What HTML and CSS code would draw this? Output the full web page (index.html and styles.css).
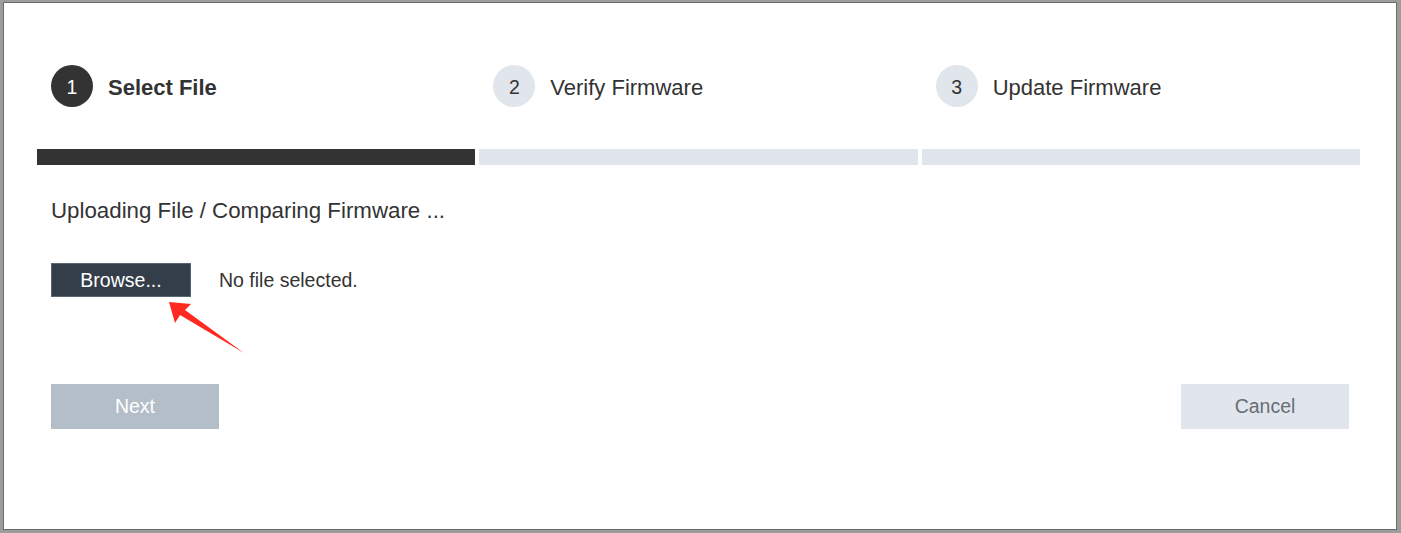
FILE: index.html
```html
<!DOCTYPE html>
<html lang="en">
<head>
    <meta charset="UTF-8">
    <meta name="viewport" content="width=device-width, initial-scale=1.0">
    <title>Firmware Update</title>
    <link rel="stylesheet" href="styles.css">
</head>
<body>
    <div class="modal">
        <div class="steps">
            <div class="step active">
                <span class="step-num">1</span>
                <span class="step-label">Select File</span>
            </div>
            <div class="step">
                <span class="step-num">2</span>
                <span class="step-label">Verify Firmware</span>
            </div>
            <div class="step">
                <span class="step-num">3</span>
                <span class="step-label">Update Firmware</span>
            </div>
        </div>
        <div class="progress">
            <div class="segment done"></div>
            <div class="segment"></div>
            <div class="segment"></div>
        </div>

        <div class="content">
            <p class="status">Uploading File / Comparing Firmware ...</p>
            <div class="file-row">
                <button class="browse">Browse...</button>
                <span class="file-name">No file selected.</span>
                <svg class="arrow" width="90" height="70" viewBox="160 295 90 70">
                    <polygon points="169,303 191,305 185,311 244,354 180,316 175,324" fill="#ff2a1f"/>
                </svg>
            </div>
        </div>

        <div class="footer">
            <button class="btn-next" disabled>Next</button>
            <button class="btn-cancel">Cancel</button>
        </div>
    </div>
</body>
</html>
```

FILE: styles.css
```css
html, body {
    height: 100%;
}
body {
    margin: 0;
    padding: 2px 4px 3px 3px;
    box-sizing: border-box;
    background: #9c9c9c;
    font-family: "Liberation Sans", Arial, sans-serif;
    color: #333;
}
.modal {
    height: 100%;
    box-sizing: border-box;
    background: #fff;
    border: 1px solid #6a6a6a;
    padding: 62px 36px 0 33px;
}
.steps, .progress {
    display: grid;
    grid-template-columns: 1fr 1fr 1fr;
    column-gap: 4px;
}
.step {
    display: flex;
    align-items: center;
    gap: 15px;
    padding-left: 14px;
    height: 42px;
}
.step-num {
    width: 42px;
    height: 42px;
    box-sizing: border-box;
    padding-top: 3px;
    border-radius: 50%;
    background: #e1e6ec;
    color: #333;
    font-size: 19.5px;
    display: flex;
    align-items: center;
    justify-content: center;
}
.step-label {
    font-size: 22px;
    padding-top: 4px;
}
.step.active .step-num {
    background: #333;
    color: #fff;
}
.step.active .step-label {
    font-weight: bold;
}
.progress {
    margin-top: 42px;
}
.segment {
    height: 16px;
    background: #e1e6ec;
}
.segment.done {
    background: #333;
}
.content {
    padding-left: 14px;
}
.status {
    font-size: 22.3px;
    line-height: 26px;
    margin: 33px 0 0;
}
.file-row {
    position: relative;
    display: flex;
    align-items: center;
    gap: 28px;
    margin-top: 39px;
}
.browse {
    width: 140px;
    height: 34px;
    background: #333e4a;
    border: 1px solid #5b6670;
    color: #fff;
    font-family: inherit;
    font-size: 19.5px;
    padding: 0;
}
.file-name {
    font-size: 19.5px;
}
.arrow {
    position: absolute;
    left: 109px;
    top: 31px;
}
.footer {
    display: flex;
    justify-content: space-between;
    padding: 0 11px 0 14px;
    margin-top: 87px;
}
.footer button {
    width: 168px;
    height: 45px;
    border: none;
    font-family: inherit;
    font-size: 19.5px;
    padding: 0;
}
.btn-next {
    background: #b4bec9;
    color: #fff;
}
.btn-cancel {
    background: #e1e6ec;
    color: #666e77;
}
```
